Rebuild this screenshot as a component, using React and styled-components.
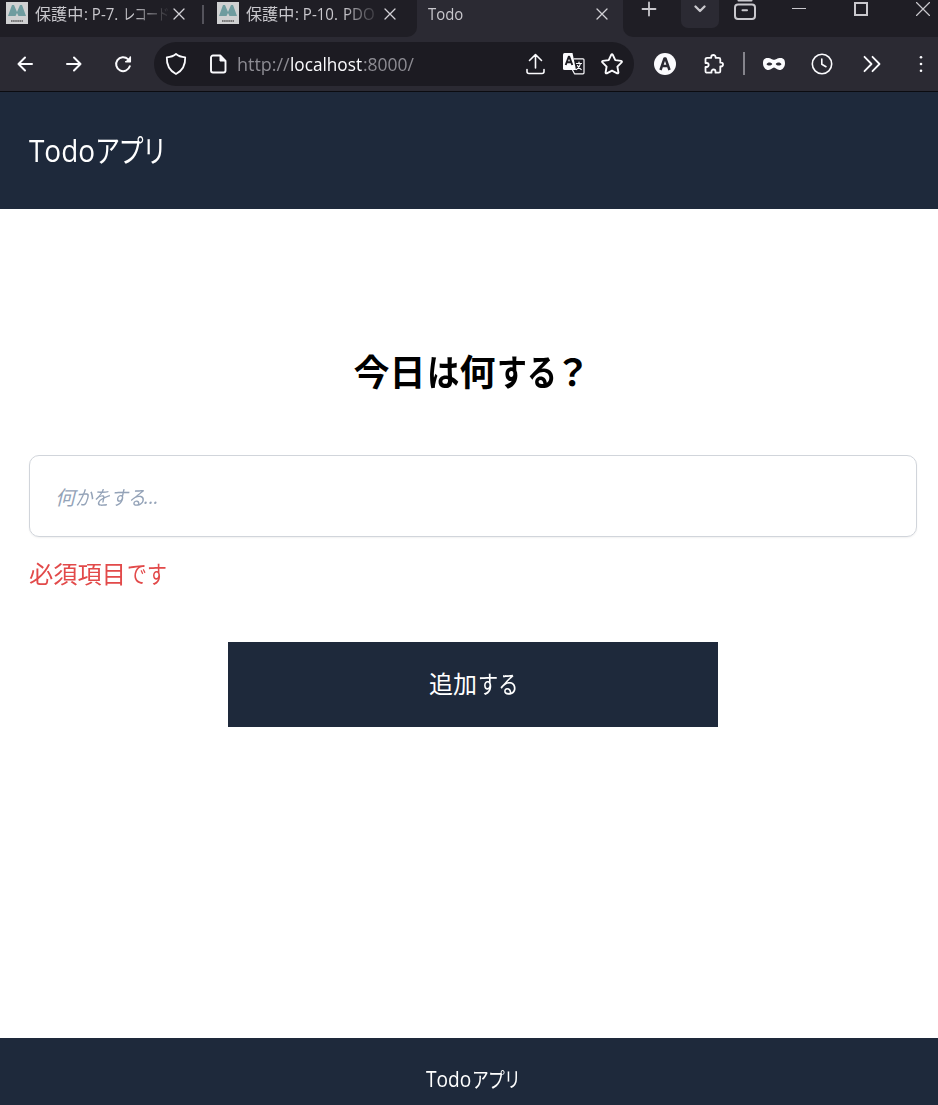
import React from 'react';
import styled, { createGlobalStyle } from 'styled-components';

const GlobalStyle = createGlobalStyle`
  *, *::before, *::after { box-sizing: border-box; }
  html, body { margin: 0; padding: 0; background: #fff; overflow: hidden; }
  body { font-family: 'Open Sans', 'Noto Sans CJK JP', sans-serif; }
`;

const Window = styled.div`
  display: flex;
  flex-direction: column;
  width: 100%;
  height: 1105px;
  overflow: hidden;
`;

/* Fixed-advance run of text, condensed horizontally inside its slot. */
const Run = styled.span`
  display: inline-block;
  width: ${(p) => p.$w}px;
  white-space: pre;
  text-align: left;
  letter-spacing: ${(p) => p.$ls || 0}px;
  transform: scaleX(${(p) => p.$s || 1});
  transform-origin: left center;
`;

/* ---------- Tab strip ---------- */
const TabStrip = styled.div`
  display: flex;
  flex: none;
  height: 37px;
  background: #2b2a33;
`;
const InactiveTabs = styled.div`
  display: flex;
  flex: none;
  width: 417px;
  background: #1f1e25;
  border-radius: 0 0 10px 0;
`;
const Tab = styled.div`
  display: flex;
  align-items: center;
  flex: none;
  width: ${(p) => p.$w}px;
  height: 28px;
  padding-left: ${(p) => p.$pad}px;
  color: #c9c8cd;
`;
const TabSeparator = styled.div`
  flex: none;
  width: 2px;
  height: 19px;
  margin-top: 5px;
  background: #54535b;
`;
const Favicon = styled.svg`
  flex: none;
  width: 22px;
  height: 22px;
  margin-right: 7px;
  margin-bottom: 2px;
`;
const TabTitle = styled.div`
  flex: none;
  width: ${(p) => p.$w}px;
  height: 28px;
  overflow: hidden;
  font-size: 15.5px;
  line-height: 29px;
  white-space: nowrap;
  ${(p) => p.$fade && 'mask-image: linear-gradient(to right, #000 98px, rgba(0,0,0,.4) 118px, rgba(0,0,0,.12) 132px);'}
`;
const TabClose = styled.div`
  display: flex;
  align-items: center;
  justify-content: center;
  flex: none;
  width: ${(p) => p.$w}px;
  height: 28px;
  color: #d2d1d6;
`;
const StripActions = styled.div`
  display: flex;
  flex: 1;
  overflow: hidden;
  background: #1f1e25;
  border-radius: 0 0 0 10px;
`;
const StripCell = styled.div`
  display: flex;
  align-items: center;
  justify-content: center;
  flex: none;
  width: ${(p) => p.$w}px;
  height: 18px;
  color: #c9c8cd;
`;
const TabListButton = styled(StripCell)`
  height: 28px;
  margin-left: 6px;
  padding-bottom: 10px;
  background: #2b2a33;
  border-radius: 0 0 7px 7px;
`;

/* ---------- Toolbar ---------- */
const Toolbar = styled.div`
  display: flex;
  align-items: center;
  flex: none;
  height: 55px;
  background: #2b2a33;
  border-bottom: 1px solid #0b0b10;
`;
const Cell = styled.div`
  display: flex;
  align-items: center;
  justify-content: center;
  flex: none;
  width: ${(p) => p.$w}px;
  height: 28px;
  color: #fbfbfe;
`;
const AddressBar = styled.div`
  display: flex;
  align-items: center;
  flex: none;
  width: 480px;
  height: 44px;
  margin: 0 11px 0 6px;
  padding-right: 3px;
  background: #1c1b22;
  border-radius: 22px;
`;
const Url = styled.div`
  flex: 1;
  font-size: 19px;
  line-height: 28px;
  white-space: nowrap;
  color: #8d8c93;
  strong { font-weight: 400; color: #fbfbfe; }
`;
const ToolbarDivider = styled.div`
  flex: none;
  width: 2px;
  height: 23px;
  margin-bottom: 2px;
  background: #85848c;
`;

/* ---------- Page ---------- */
const PageHeader = styled.header`
  flex: none;
  height: 117px;
  padding: 37px 29px 0;
  background: #1e293b;
  color: #fff;
  font-size: 31px;
  line-height: 42px;
`;
const Main = styled.main`
  display: flex;
  flex-direction: column;
  flex: 1;
  padding: 137px 21px 0 29px;
`;
const Heading = styled.h1`
  margin: 0;
  font: 700 36px/48px 'Noto Sans CJK JP', sans-serif;
  text-align: center;
  color: #000;
`;
const TaskField = styled.div`
  display: flex;
  align-items: center;
  height: 82px;
  margin-top: 61px;
  padding-left: 25px;
  border: 1px solid #d1d5db;
  border-radius: 10px;
  box-shadow: 0 1px 2px rgba(0, 0, 0, 0.06);
  color: #94a3b8;
  font-size: 20px;
  font-style: italic;
`;
const ErrorText = styled.p`
  margin: 19px 0 0;
  color: #e24a4a;
  font-size: 24px;
  line-height: 35px;
`;
const AddButton = styled.button`
  align-self: center;
  width: 490px;
  height: 85px;
  margin-top: 51px;
  padding: 0 0 1px 1px;
  border: 0;
  background: #1e293b;
  color: #fff;
  font: 24px/36px 'Open Sans', 'Noto Sans CJK JP', sans-serif;
`;
const PageFooter = styled.footer`
  flex: none;
  height: 67px;
  padding: 26px 21px 0 29px;
  background: #1e293b;
  color: #fff;
  font-size: 21px;
  line-height: 30px;
  text-align: center;
`;

const Icon = ({ w, h = w, sw = 2, children }) => (
  <svg width={w} height={h} viewBox={`0 0 ${w} ${h}`} fill="none" stroke="currentColor"
    strokeWidth={sw} strokeLinecap="round" strokeLinejoin="round">
    {children}
  </svg>
);

const SiteIcon = () => (
  <Favicon viewBox="0 0 22 22">
    <rect width="22" height="22" fill="#d0d1d2" />
    <path d="M2 14 6 3h2L11 10 14 3h2L20 14h-7.500L11 11l-1.500 3z" fill="#6f9c9f" />
    <path d="M5 19h12" stroke="#555" strokeWidth="1.6" strokeDasharray="1.6 .5" />
  </Favicon>
);

const CloseIcon = () => <Icon w={12} sw={1.3}><path d="M1 1l10 10M11 1L1 11" /></Icon>;

const AppName = ({ latin, kana, latinScale, kanaScale, kanaSpacing }) => (
  <>
    <Run $w={latin} $s={latinScale}>Todo</Run>
    <Run $w={kana} $s={kanaScale} $ls={kanaSpacing}>アプリ</Run>
  </>
);

export default function App() {
  return (
    <Window>
      <GlobalStyle />
      <TabStrip>
        <InactiveTabs>
          <Tab $w={202} $pad={6}>
            <SiteIcon />
            <TabTitle $w={133} $fade>
              <Run $w={49} $s={1.04}>保護中</Run><Run $w={39} $s={0.97}>: P-7. </Run><Run $w={44} $s={0.79} $ls={-1}>レコード</Run>
            </TabTitle>
            <TabClose $w={22}><CloseIcon /></TabClose>
          </Tab>
          <TabSeparator />
          <Tab $w={213} $pad={13}>
            <SiteIcon />
            <TabTitle $w={132} $fade>
              <Run $w={49} $s={1.04}>保護中</Run><Run $w={48} $s={0.97}>: P-10. </Run><Run $w={34} $s={0.97}>PDO</Run>
            </TabTitle>
            <TabClose $w={24}><CloseIcon /></TabClose>
          </Tab>
        </InactiveTabs>
        <Tab $w={206} $pad={11}>
          <TabTitle $w={162}><Run $w={36} $s={0.96}>Todo</Run></TabTitle>
          <TabClose $w={23}><CloseIcon /></TabClose>
        </Tab>
        <StripActions>
          <StripCell $w={52}><Icon w={16} sw={1.8}><path d="M8 1.500v13M1.500 8h13" /></Icon></StripCell>
          <TabListButton $w={38}><Icon w={12} h={8} sw={2.3}><path d="M1.500 1.500 6 6l4.500-4.500" /></Icon></TabListButton>
          <StripCell $w={52}>
            <Icon w={24} h={24} sw={2}>
              <path d="M5.500 3.500h13" />
              <rect x="2" y="7.500" width="20" height="14.500" rx="3" />
              <path d="M9.500 13.200h4.500" />
            </Icon>
          </StripCell>
          <StripCell $w={56}><Icon w={14} sw={1}><path d="M0 6.500h14" /></Icon></StripCell>
          <StripCell $w={68}><Icon w={14}><path d="M1 1h12v12H1z" strokeLinejoin="miter" /></Icon></StripCell>
          <StripCell $w={56}><Icon w={14} sw={1.2}><path d="M.5.5l13 13M13.500.5l-13 13" /></Icon></StripCell>
        </StripActions>
      </TabStrip>

      <Toolbar>
        <Cell $w={50}><Icon w={16}><path d="M15 8H1.500M8 1.500 1.500 8 8 14.500" /></Icon></Cell>
        <Cell $w={48}><Icon w={16}><path d="M1 8h13.500M8 1.500 14.500 8 8 14.500" /></Icon></Cell>
        <Cell $w={50}>
          <Icon w={18}>
            <path d="M15.800 11.300A7 7 0 1 1 14 4.100l2 2" />
            <path d="M16.500 1.500v5.500H11z" fill="currentColor" stroke="none" />
            <path d="M16.300 2v4.700h-4.600" strokeWidth="1.500" />
          </Icon>
        </Cell>
        <AddressBar>
          <Cell $w={44}>
            <Icon w={22} h={24} sw={1.8}><path d="M11 2C13 3.800 16.500 5 20.200 5.300 20.500 12.500 18 18.500 11 22 4 18.500 1.500 12.500 1.800 5.300 5.500 5 9 3.800 11 2z" /></Icon>
          </Cell>
          <Cell $w={39}>
            <Icon w={18} h={20} sw={1.9}>
              <path d="M4 1.500h7.200L16.500 7v9.500a2 2 0 0 1-2 2H4a2 2 0 0 1-2-2v-13a2 2 0 0 1 2-2z" />
              <path d="M11 1.500V7h5.500z" fill="currentColor" strokeWidth="1" />
            </Icon>
          </Cell>
          <Url>
            <Run $w={53} $s={0.945}>http://</Run><strong><Run $w={73} $s={0.905}>localhost</Run></strong><Run $w={52} $s={0.92}>:8000/</Run>
          </Url>
          <Cell $w={38}>
            <Icon w={20} h={22} sw={1.6}><path d="M9.500 15V2M3.500 7.500 9.500 1.500l6 6M1 16.500v2a2 2 0 0 0 2 2h13a2 2 0 0 0 2-2v-2" /></Icon>
          </Cell>
          <Cell $w={38}>
            <Icon w={24} h={24} sw={1.2}>
              <path d="M12 6.800h9q1 0 1 1v13q0 1-1 1h-8.500L10.500 18" />
              <path d="M1 2.500Q1 1 2.500 1h8L14 18H2.500Q1 18 1 16.500z" fill="currentColor" stroke="none" />
              <path d="M3.700 13 6.700 4.800h.6L10.300 13M4.800 10.200h4.400" stroke="#1c1b22" strokeWidth="1.900" strokeLinecap="butt" />
              <path d="M14.500 11.500h5M17 10v1.500M18.500 11.500q-.8 4-4 6M15.500 13.500q1.200 2.800 3.700 4" strokeWidth="1.200" />
            </Icon>
          </Cell>
          <Cell $w={38}>
            <Icon w={22} h={22} sw={1.9}><path d="M10.200 1.800q.8-1.200 1.600 0l2.500 5.300 5.800.8q1.300.3.500 1.500l-4.200 4.200 1 5.800q.1 1.300-1.200.9L11 17.600l-5.200 2.700q-1.300.4-1.200-.9l1-5.800L1.400 9.400q-.8-1.200.5-1.500l5.800-.8z" /></Icon>
          </Cell>
        </AddressBar>
        <Cell $w={40}>
          <Icon w={22}>
            <circle cx="11" cy="11" r="11" fill="currentColor" stroke="none" />
            <path d="M6.500 17 10.500 5.500h1l4 11.500M8 13h6" stroke="#2b2a33" strokeWidth="2.500" strokeLinecap="butt" />
          </Icon>
        </Cell>
        <Cell $w={58}>
          <Icon w={20} sw={1.8}>
            <path d="M3 3.800h4.200V3.200a2.200 2.200 0 0 1 4.400 0v.6h3.200a1.500 1.500 0 0 1 1.500 1.500v3.400h.8a1.900 1.900 0 0 1 0 3.800h-.8v4.700a1.500 1.500 0 0 1-1.500 1.500h-3.300v-1.200a2 2 0 0 0-4 0v1.200H3a1.500 1.500 0 0 1-1.500-1.500v-4.200h1.200a2 2 0 0 0 0-4H1.500V5.300A1.500 1.500 0 0 1 3 3.800z" />
          </Icon>
        </Cell>
        <ToolbarDivider />
        <Cell $w={58}>
          <Icon w={22} h={14}>
            <path fillRule="evenodd" stroke="none" fill="currentColor" d="M4.500 1C8 1 9 2.800 11 2.800S14 1 17.500 1C21 1 22 3.500 22 6.200 22 10 19.500 13 16.500 13c-2.700 0-3.800-2.500-5.500-2.500S8.200 13 5.500 13C2.500 13 0 10 0 6.200 0 3.500 1 1 4.500 1zM3.500 7.200C4.500 9 8 9.200 9.300 7 8 4.800 4.500 5 3.500 7.200zM18.500 7.200C17.500 5 14 4.800 12.700 7c1.300 2.200 4.800 2 5.800.2z" />
          </Icon>
        </Cell>
        <Cell $w={38}><Icon w={22} sw={1.6}><circle cx="11" cy="11" r="9.700" /><path d="M10.800 6v5.300l4.200 2.400" /></Icon></Cell>
        <Cell $w={62}><Icon w={18} h={18} sw={1.8}><path d="M1.500 1.800 8.500 9l-7 7.200M9.500 1.800 16.500 9l-7 7.200" /></Icon></Cell>
        <Cell $w={35}>
          <Icon w={4} h={18}><g fill="currentColor" stroke="none"><circle cx="2" cy="2.300" r="1.300" /><circle cx="2" cy="9" r="1.300" /><circle cx="2" cy="15.700" r="1.300" /></g></Icon>
        </Cell>
      </Toolbar>

      <PageHeader><AppName latin={66} latinScale={0.9} kana={70} kanaScale={0.81} kanaSpacing={-2} /></PageHeader>
      <Main>
        <Heading>
          <Run $w={73}>今日</Run><Run $w={33} $s={0.9}>は</Run><Run $w={37}>何</Run><Run $w={58} $s={0.83}>する</Run><Run $w={38}>？</Run>
        </Heading>
        <TaskField>
          <Run $w={20}>何</Run><Run $w={69} $s={0.88}>かをする</Run><Run $w={16} $s={0.98}>...</Run>
        </TaskField>
        <ErrorText><Run $w={98} $s={1.01}>必須項目</Run><Run $w={40} $s={0.83}>です</Run></ErrorText>
        <AddButton type="button"><Run $w={49}>追加</Run><Run $w={40} $s={0.84}>する</Run></AddButton>
      </Main>
      <PageFooter><AppName latin={46} latinScale={0.91} kana={49} kanaScale={0.8} kanaSpacing={-1} /></PageFooter>
    </Window>
  );
}
